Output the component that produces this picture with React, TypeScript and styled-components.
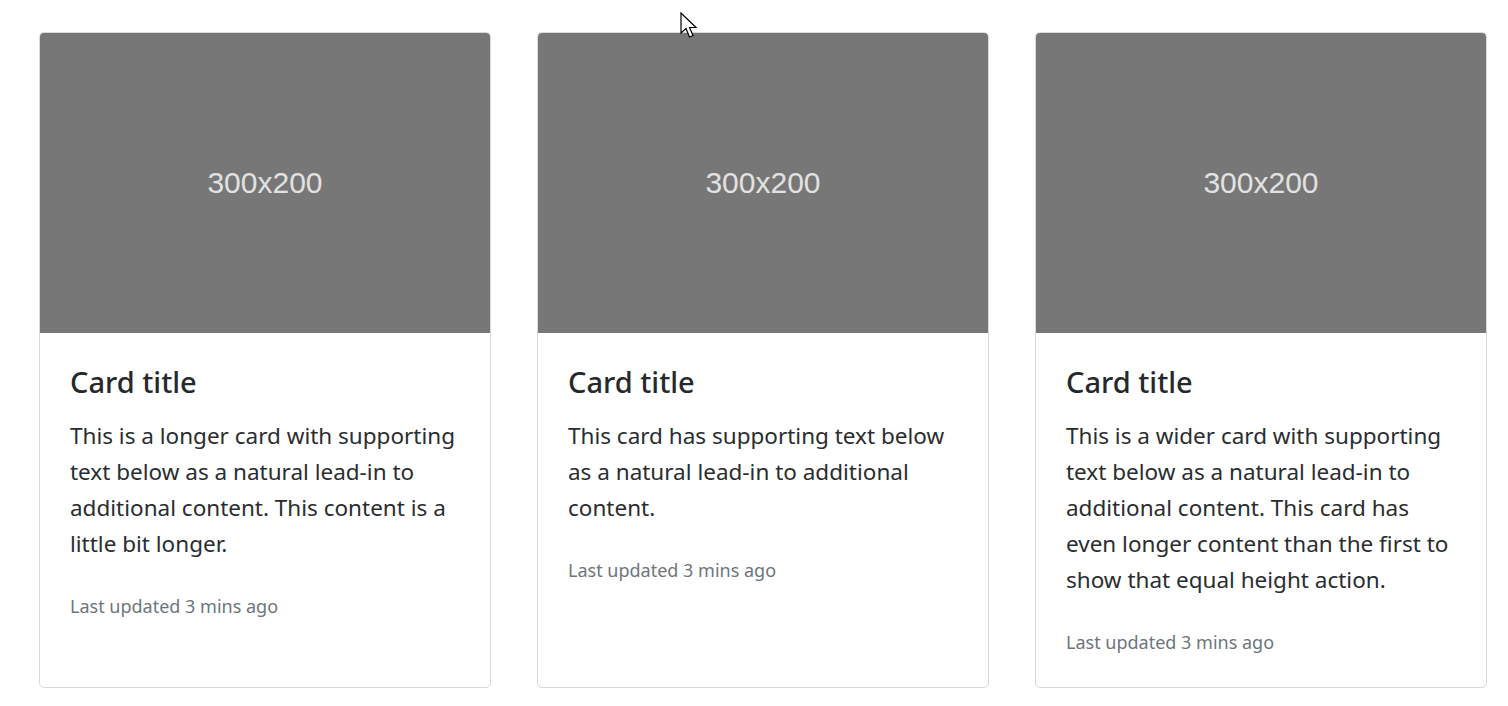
import React from "react";
import styled, { createGlobalStyle } from "styled-components";

const Global = createGlobalStyle`
  html, body { margin: 0; padding: 0; background: #fff; }
  body {
    font-family: "Noto Sans", "Open Sans", sans-serif;
    font-size: 24px;
    line-height: 1.5;
    color: #212529;
  }
  * { box-sizing: border-box; }
`;

const Page = styled.div`
  position: relative;
  height: 706px;
  overflow: hidden;
  padding: 32px 0 0 39px;
`;

const Deck = styled.div`
  display: flex;
  align-items: stretch;
  gap: 46px;
`;

const Card = styled.div`
  width: 452px;
  display: flex;
  flex-direction: column;
  background: #fff;
  border: 1px solid #d9d9d9;
  border-radius: 5px;
`;

const Placeholder = styled.div`
  height: 300px;
  background: #777777;
  border-radius: 4px 4px 0 0;
  display: flex;
  align-items: center;
  justify-content: center;
  color: #e2e2e2;
  font-family: "Liberation Sans", Arial, sans-serif;
  font-size: 30px;
  padding-bottom: 2px;
`;

const Body = styled.div`
  flex: 1;
  padding: 32px 30px 28px;
`;

const Title = styled.h5`
  margin: 0 0 18px;
  font-size: 29px;
  font-weight: 500;
  line-height: 1.2;
  color: #26292c;
`;

const Text = styled.p`
  margin: 0 0 24px;
  font-size: 22.5px;
  line-height: 36px;
  color: #2a2d30;
  &:last-child { margin-bottom: 0; }
`;

const Muted = styled.small`
  font-size: 18px;
  color: #6c757d;
  position: relative;
  top: 1px;
`;

const Cursor = styled.svg`
  position: absolute;
  left: 680px;
  top: 12px;
  width: 19px;
  height: 28px;
  pointer-events: none;
`;

const cards = [
  "This is a longer card with supporting text below as a natural lead-in to additional content. This content is a little bit longer.",
  "This card has supporting text below as a natural lead-in to additional content.",
  "This is a wider card with supporting text below as a natural lead-in to additional content. This card has even longer content than the first to show that equal height action.",
];

export default function App() {
  return (
    <>
      <Global />
      <Page>
        <Deck>
          {cards.map((t, i) => (
            <Card key={i}>
              <Placeholder>300x200</Placeholder>
              <Body>
                <Title>Card title</Title>
                <Text>{t}</Text>
                <Text>
                  <Muted>Last updated 3 mins ago</Muted>
                </Text>
              </Body>
            </Card>
          ))}
        </Deck>
        <Cursor viewBox="0 0 19 28">
          <path
            d="M1 1 L1 21 L6 16.5 L9.5 25 L13 23.5 L9.5 15.5 L16 15.5 Z"
            fill="#fff"
            stroke="#000"
            strokeWidth="1.2"
            strokeLinejoin="miter"
          />
        </Cursor>
      </Page>
    </>
  );
}
